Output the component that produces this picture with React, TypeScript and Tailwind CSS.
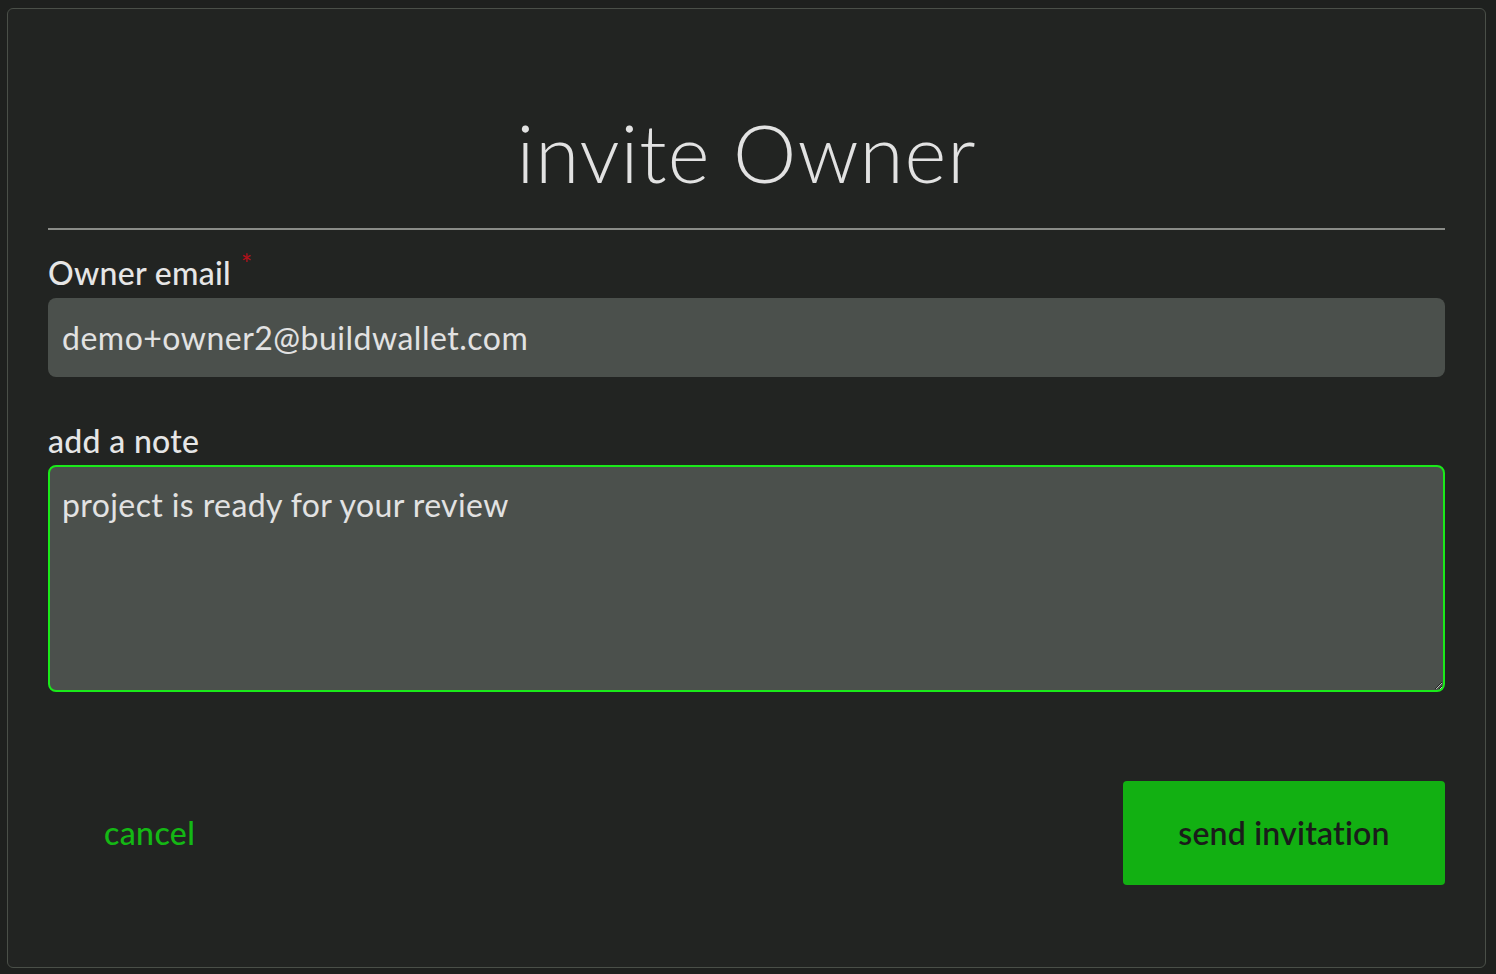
import React from 'react';

const font = { fontFamily: 'Lato, "Noto Sans", sans-serif' };

export default function App() {
    return (
        <div className="min-h-screen bg-[#1e201e] pl-[7px] pr-[10px] pt-[8px] pb-[6px]" style={font}>
            <div className="h-[960px] rounded-md border border-[#4a4f48] bg-[#222422] px-10 flex flex-col">
                <h1 className="pt-[103px] text-center text-[80px] leading-[80px] font-light text-[#e2e2e2] tracking-[1px]">
                    invite Owner
                </h1>
                <div className="mt-[36px] h-[2px] bg-[#8a8c88]" />

                <label className="mt-[25px] flex items-start text-[32px] leading-[36px] font-medium tracking-[0.3px] text-[#e6e6e6]">
                    Owner email
                    <span className="ml-[10px] -mt-[4px] text-[26px] leading-[26px] text-[#b0101a]">*</span>
                </label>
                <input
                    className="mt-[7px] h-[79px] w-full rounded-lg bg-[#4b504c] px-[14px] text-[32px] tracking-[0.5px] text-[#e2e2e2] outline-none"
                    style={font}
                    defaultValue="demo+owner2@buildwallet.com"
                />

                <label className="mt-[46px] text-[32px] leading-[36px] font-medium tracking-[0.3px] text-[#e6e6e6]">add a note</label>
                <textarea
                    className="mt-[6px] h-[227px] w-full rounded-lg border-2 border-[#1aea1a] bg-[#4b504c] px-[12px] py-[20px] text-[32px] leading-[36px] tracking-[0.4px] text-[#e2e2e2] outline-none"
                    style={font}
                    defaultValue="project is ready for your review"
                />

                <div className="mt-[89px] flex items-center justify-between">
                    <button className="px-14 text-[32px] font-medium tracking-[0.4px] text-[#14b814]">cancel</button>
                    <button className="h-[104px] w-[322px] rounded bg-[#12b012] text-[32px] font-semibold tracking-[0.2px] text-[#1a1c1a]">
                        send invitation
                    </button>
                </div>
            </div>
        </div>
    );
}
